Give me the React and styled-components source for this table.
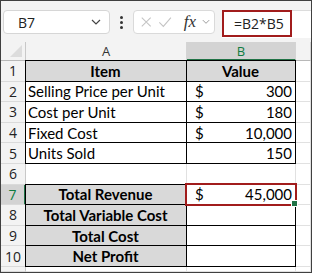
import React from "react";
import styled, { createGlobalStyle, css } from "styled-components";

const GlobalStyle = createGlobalStyle`
  html, body { margin: 0; padding: 0; background: #fff; }
  body { overflow: hidden; }
`;

const Frame = styled.div`
  box-sizing: border-box;
  width: 312px;
  height: 273px;
  border: 1px solid #404040;
  background: #f3f3f3;
  display: flex;
  flex-direction: column;
  overflow: hidden;
`;

const FormulaBar = styled.div`
  height: 41px;
  flex: none;
  display: flex;
  align-items: flex-start;
  padding: 9px 0 0 2px;
  box-sizing: border-box;
  font-family: "Open Sans", "Noto Sans", sans-serif;
`;

const NameBox = styled.div`
  box-sizing: border-box;
  width: 107px;
  height: 24px;
  background: #fff;
  border: 1px solid #d6d6d6;
  border-radius: 4px;
  display: flex;
  align-items: center;
  justify-content: space-between;
  padding: 0 8px 0 14px;
  font-size: 14px;
  color: #222;
`;

const Dots = styled.div`
  width: 22px;
  height: 24px;
  display: flex;
  flex-direction: column;
  align-items: center;
  justify-content: center;
  gap: 2px;
  span {
    width: 3px;
    height: 3px;
    border-radius: 50%;
    background: #333;
  }
`;

const FxBox = styled.div`
  box-sizing: border-box;
  width: 82px;
  height: 24px;
  margin-left: 1px;
  background: #fff;
  border: 1px solid #dadada;
  border-radius: 4px;
  display: flex;
  align-items: center;
  padding: 0 4px 0 6px;
  gap: 6px;
`;

const Fx = styled.span`
  font-family: "Liberation Serif", "DejaVu Serif", serif;
  font-style: italic;
  font-size: 17px;
  color: #333;
  margin-left: 5px;
`;

const FormulaInput = styled.div`
  flex: 1;
  height: 27px;
  margin-left: 7px;
  background: #fff;
  border-top: 1px solid #dcdcdc;
  display: flex;
  align-items: flex-start;
`;

const FormulaText = styled.div`
  box-sizing: border-box;
  width: 70px;
  height: 27px;
  border: 2px solid #a11c1c;
  margin-top: -1px;
  display: flex;
  align-items: center;
  padding-left: 10px;
  font-size: 14px;
  color: #222;
`;

const Sheet = styled.div`
  flex: 1;
  display: grid;
  grid-template-columns: 25px 161px 109px 1fr;
  grid-template-rows: 19px repeat(10, 20.6px) 1fr;
  background: #fff;
  font-family: "Lato", "Liberation Sans", sans-serif;
`;

const Corner = styled.div`
  background: #f3f3f3;
  border-right: 1px solid #c8c8c8;
  border-bottom: 1px solid #b8b8b8;
  position: relative;
  &::after {
    content: "";
    position: absolute;
    right: 3px;
    bottom: 3px;
    border-style: solid;
    border-width: 0 0 12px 12px;
    border-color: transparent transparent #dcdcdc transparent;
  }
`;

const ColHead = styled.div`
  display: flex;
  align-items: center;
  justify-content: center;
  font-family: "Open Sans", "Noto Sans", sans-serif;
  font-size: 13px;
  color: #333;
  background: #f3f3f3;
  border-right: 1px solid #d4d4d4;
  border-bottom: 1px solid #b8b8b8;
  ${(p) =>
    p.$active &&
    css`
      background: #d3d3d3;
      color: #107c41;
      border-bottom: 2px solid #217346;
    `}
`;

const RowHead = styled.div`
  display: flex;
  align-items: center;
  justify-content: center;
  font-family: "Open Sans", "Noto Sans", sans-serif;
  font-size: 14px;
  color: #222;
  background: #f3f3f3;
  border-right: 1px solid #c8c8c8;
  border-bottom: 1px solid #dadada;
  ${(p) =>
    p.$active &&
    css`
      background: #d3d3d3;
      color: #107c41;
      border-right: 2px solid #217346;
    `}
`;

const Cell = styled.div`
  position: relative;
  display: flex;
  align-items: center;
  box-sizing: border-box;
  padding: 0 3px 0 2px;
  font-size: 15px;
  color: #000;
  white-space: nowrap;
  border-right: 1px solid #e1e1e1;
  border-bottom: 1px solid #e1e1e1;
  justify-content: ${(p) => p.$align || "flex-start"};
  background: ${(p) => (p.$fill ? "#d9d9d9" : "#fff")};
  font-weight: ${(p) => (p.$bold ? 700 : 400)};
  ${(p) =>
    p.$boxed &&
    css`
      &::after {
        content: "";
        position: absolute;
        top: -1px;
        left: -1px;
        right: -1px;
        bottom: -1px;
        border: 1px solid #000;
        z-index: 1;
        pointer-events: none;
      }
    `}
  ${(p) =>
    p.$selected &&
    css`
      &::before {
        content: "";
        position: absolute;
        top: -2px;
        left: -2px;
        right: -2px;
        bottom: -2px;
        border: 2px solid #a11c1c;
        z-index: 2;
      }
    `}
`;

const Handle = styled.span`
  position: absolute;
  right: -3px;
  bottom: -3px;
  width: 5px;
  height: 5px;
  background: #217346;
  border: 1px solid #fff;
  z-index: 3;
`;

const Money = styled.div`
  flex: 1;
  display: flex;
  justify-content: space-between;
  padding-left: 6px;
`;

const Cross = () => (
  <svg width="14" height="14" viewBox="0 0 14 14">
    <path d="M2 2 L12 12 M12 2 L2 12" stroke="#c4c4c4" strokeWidth="1.2" fill="none" />
  </svg>
);

const Check = () => (
  <svg width="16" height="14" viewBox="0 0 16 14">
    <path d="M1.5 7.5 L6 12 L14.5 2" stroke="#c4c4c4" strokeWidth="1.2" fill="none" />
  </svg>
);

const Chevron = ({ color = "#444", size = 10 }) => (
  <svg width={size} height={size * 0.6} viewBox="0 0 10 6">
    <path d="M1 1 L5 5 L9 1" stroke={color} strokeWidth="1.2" fill="none" />
  </svg>
);

const rows = [
  { a: "Item", b: "Value", head: true },
  { a: "Selling Price per Unit", cur: true, b: "300" },
  { a: "Cost per Unit", cur: true, b: "180" },
  { a: "Fixed Cost", cur: true, b: "10,000" },
  { a: "Units Sold", b: "150" },
  { blank: true },
  { a: "Total Revenue", cur: true, b: "45,000", total: true, sel: true },
  { a: "Total Variable Cost", total: true },
  { a: "Total Cost", total: true },
  { a: "Net Profit", total: true },
];

const App = () => {
  return (
    <>
      <GlobalStyle />
      <Frame>
        <FormulaBar>
          <NameBox>
            B7
            <Chevron />
          </NameBox>
          <Dots>
            <span />
            <span />
            <span />
          </Dots>
          <FxBox>
            <Cross />
            <Check />
            <Fx>fx</Fx>
            <Chevron color="#999" size={9} />
          </FxBox>
          <FormulaInput>
            <FormulaText>=B2*B5</FormulaText>
          </FormulaInput>
        </FormulaBar>
        <Sheet>
          <Corner />
          <ColHead>A</ColHead>
          <ColHead $active>B</ColHead>
          <ColHead />
          {rows.map((r, i) => (
            <React.Fragment key={i}>
              <RowHead $active={r.sel}>{i + 1}</RowHead>
              <Cell
                $boxed={!r.blank}
                $fill={r.head || r.total}
                $bold={r.head || r.total}
                $align={r.head || r.total ? "center" : "flex-start"}
              >
                {r.a}
              </Cell>
              <Cell
                $boxed={!r.blank}
                $fill={r.head}
                $bold={r.head}
                $selected={r.sel}
                $align={r.head ? "center" : "flex-end"}
              >
                {r.cur ? (
                  <Money>
                    <span>$</span>
                    <span>{r.b}</span>
                  </Money>
                ) : (
                  r.b
                )}
                {r.sel && <Handle />}
              </Cell>
              <Cell />
            </React.Fragment>
          ))}
          <RowHead />
          <Cell />
          <Cell />
          <Cell />
        </Sheet>
      </Frame>
    </>
  );
};

export default App;
